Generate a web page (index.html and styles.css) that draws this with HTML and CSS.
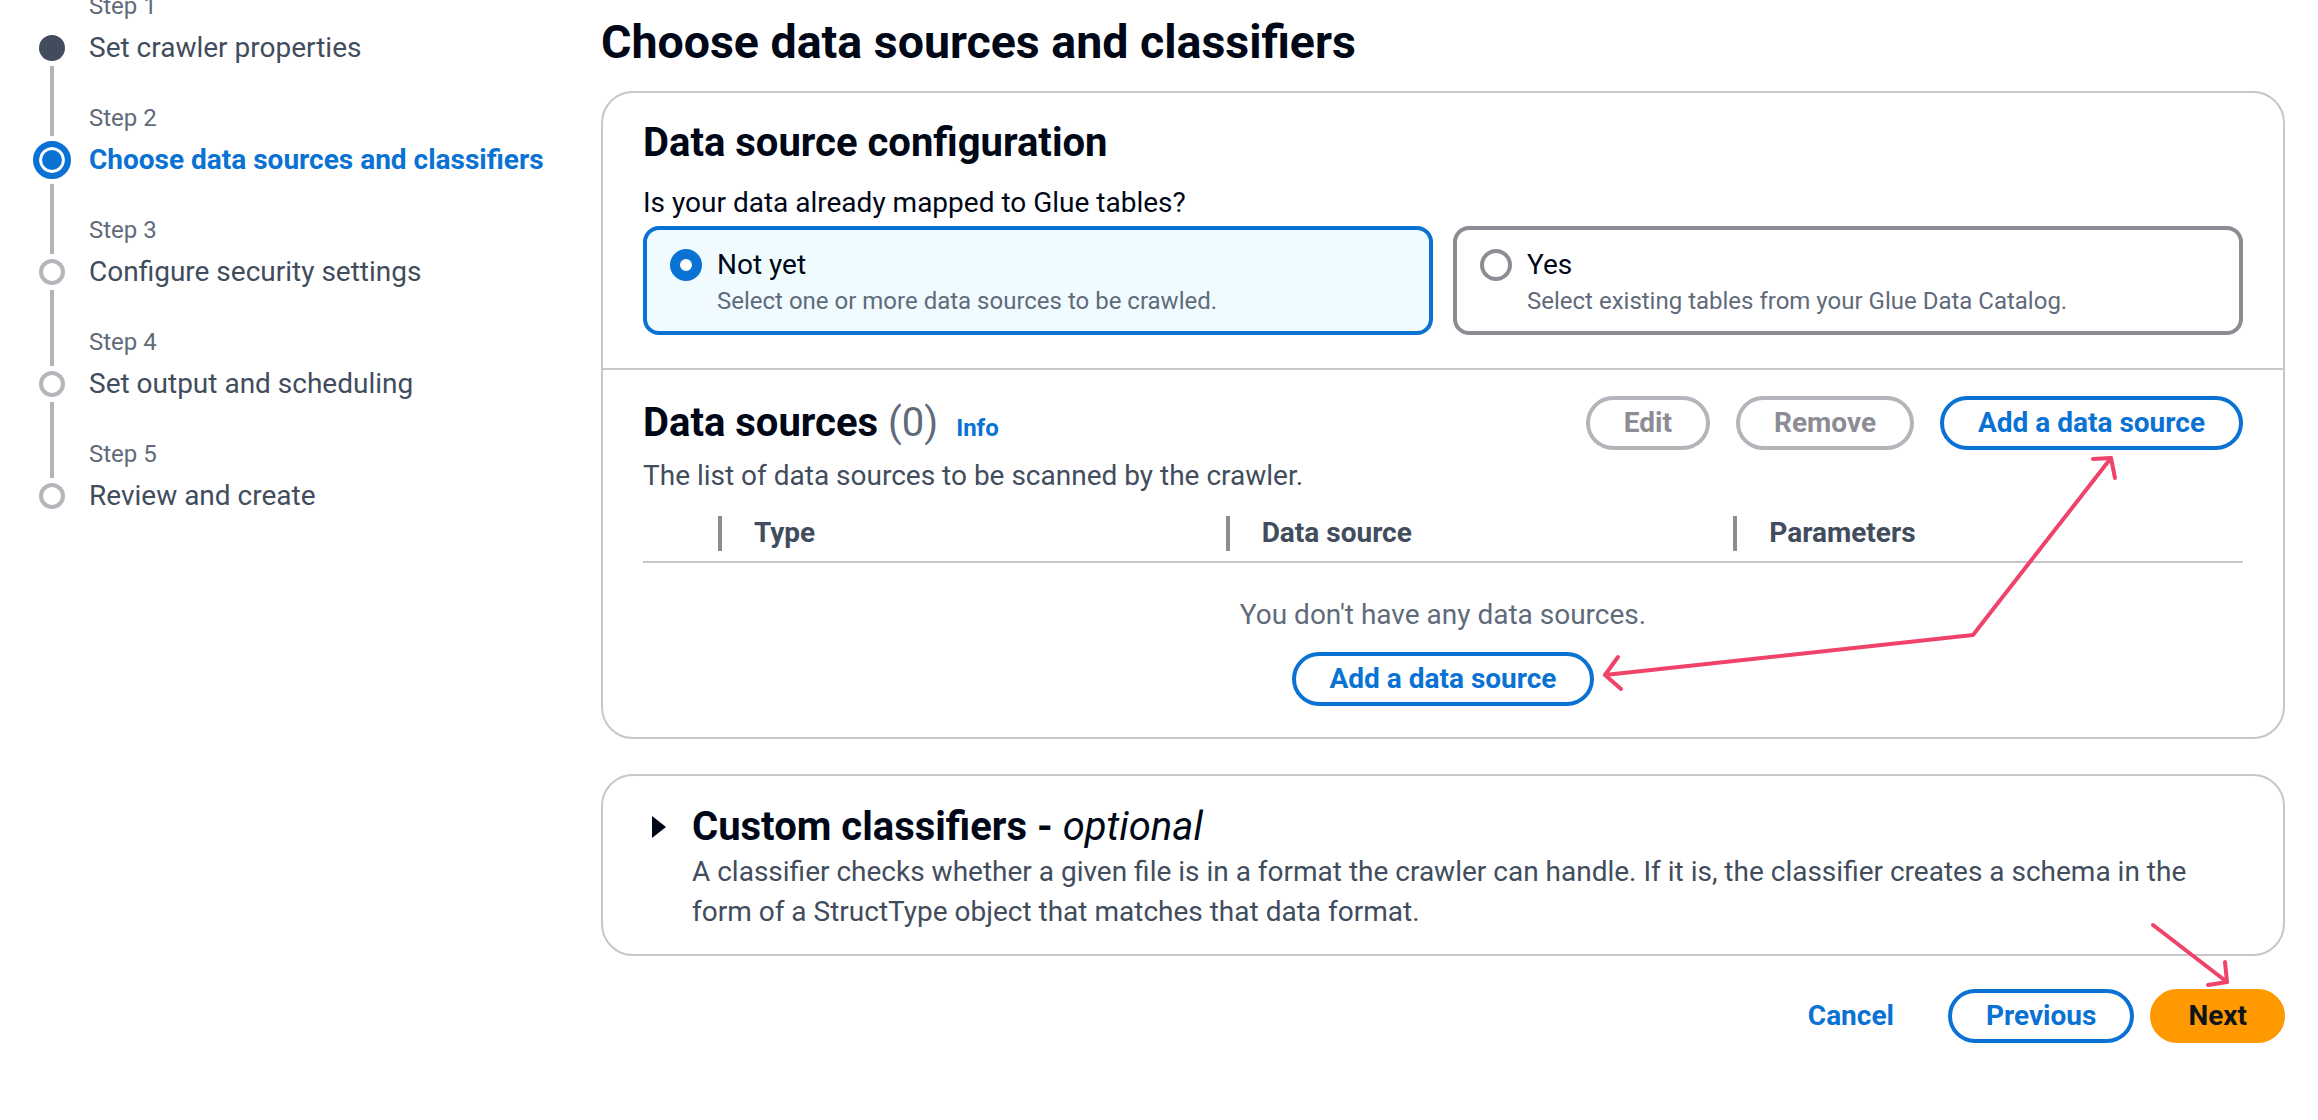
FILE: index.html
```html
<!DOCTYPE html>
<html lang="en">
<head>
<meta charset="utf-8">
<title>Choose data sources and classifiers</title>
<link rel="stylesheet" href="styles.css">
</head>
<body>
<div class="page">
  <nav class="sidebar">
    <ol class="wizard-nav">
      <li class="step">
        <span class="step-label">Step 1</span>
        <span class="step-dot step-dot--done"></span>
        <span class="step-title">Set crawler properties</span>
      </li>
      <li class="step">
        <span class="step-label">Step 2</span>
        <span class="step-dot step-dot--active"></span>
        <span class="step-title step-title--active">Choose data sources and classifiers</span>
      </li>
      <li class="step">
        <span class="step-label">Step 3</span>
        <span class="step-dot step-dot--pending"></span>
        <span class="step-title">Configure security settings</span>
      </li>
      <li class="step">
        <span class="step-label">Step 4</span>
        <span class="step-dot step-dot--pending"></span>
        <span class="step-title">Set output and scheduling</span>
      </li>
      <li class="step">
        <span class="step-label">Step 5</span>
        <span class="step-dot step-dot--pending"></span>
        <span class="step-title">Review and create</span>
      </li>
    </ol>
  </nav>

  <main class="main">
    <h1 class="page-title">Choose data sources and classifiers</h1>

    <section class="container">
      <div class="section section--config">
        <h2 class="section-title">Data source configuration</h2>
        <p class="question">Is your data already mapped to Glue tables?</p>
        <div class="tiles">
          <div class="tile tile--selected">
            <span class="radio radio--checked"></span>
            <span class="tile-label">Not yet</span>
            <span class="tile-desc">Select one or more data sources to be crawled.</span>
          </div>
          <div class="tile">
            <span class="radio"></span>
            <span class="tile-label">Yes</span>
            <span class="tile-desc">Select existing tables from your Glue Data Catalog.</span>
          </div>
        </div>
      </div>

      <div class="section section--sources">
        <div class="header-row">
          <div class="header-text">
            <h2 class="section-title ds-title">Data sources <span class="count">(0)</span><a class="info" href="#">Info</a></h2>
            <p class="desc">The list of data sources to be scanned by the crawler.</p>
          </div>
          <div class="actions">
            <button class="btn btn--disabled" type="button">Edit</button>
            <button class="btn btn--disabled" type="button">Remove</button>
            <button class="btn" type="button">Add a data source</button>
          </div>
        </div>
        <div class="table-head">
          <div class="th th--select"></div>
          <div class="th">Type</div>
          <div class="th">Data source</div>
          <div class="th">Parameters</div>
        </div>
        <div class="empty">
          <span class="empty-text">You don't have any data sources.</span>
          <button class="btn" type="button">Add a data source</button>
        </div>
      </div>
    </section>

    <section class="container expand">
      <svg class="caret" width="32" height="32" viewBox="0 0 32 32" aria-hidden="true">
        <path d="M9 5 L23 16 L9 27 Z" fill="#000716"/>
      </svg>
      <h2 class="expand-title">Custom classifiers - <em>optional</em></h2>
      <p class="expand-desc">A classifier checks whether a given file is in a format the crawler can handle. If it is, the classifier creates a schema in the form of a StructType object that matches that data format.</p>
    </section>

    <div class="footer">
      <button class="btn btn--link" type="button">Cancel</button>
      <button class="btn" type="button">Previous</button>
      <button class="btn btn--primary" type="button">Next</button>
    </div>
  </main>
</div>

<svg class="annotations" width="2318" height="1120" viewBox="0 0 2318 1120" aria-hidden="true">
  <g fill="none" stroke="#f0436a" stroke-width="4" stroke-linecap="round" stroke-linejoin="round">
    <polyline points="2111,458 1973,635 1605,675"/>
    <polyline points="2093,459 2111,458 2115,478"/>
    <polyline points="1618,657 1605,675 1621,689"/>
    <line x1="2153" y1="925" x2="2227" y2="982"/>
    <polyline points="2225,962 2227,982 2208,985"/>
  </g>
</svg>
</body>
</html>
```

FILE: styles.css
```css
html, body {
  margin: 0;
  padding: 0;
  background: #ffffff;
}

body {
  font-family: Roboto, "Liberation Sans", Arial, sans-serif;
  font-size: 28px;
  line-height: 40px;
  color: #000716;
  overflow: hidden;
}

.page {
  display: grid;
  grid-template-columns: 601px 1fr;
  padding-right: 33px;
}

/* ---------- Sidebar wizard navigation ---------- */
.wizard-nav {
  list-style: none;
  margin: -10px 0 0;
  padding: 0 0 0 33px;
  background: linear-gradient(#b4b4bb, #b4b4bb) 50px 58px / 4px 447px no-repeat;
}

.step {
  display: grid;
  grid-template-columns: 38px 1fr;
  grid-template-rows: 38px 40px;
  column-gap: 18px;
  margin-bottom: 34px;
}

.step:last-child {
  margin-bottom: 0;
}

.step-label {
  grid-column: 2;
  grid-row: 1;
  font-size: 24px;
  line-height: 32px;
  color: #5f6b7a;
}

.step-dot {
  grid-column: 1;
  grid-row: 2;
  align-self: center;
  justify-self: center;
  width: 26px;
  height: 26px;
  box-sizing: border-box;
  border-radius: 50%;
  box-shadow: 0 0 0 5px #ffffff;
}

.step-dot--done {
  background: #414d5c;
}

.step-dot--active {
  width: 38px;
  height: 38px;
  border: 6px solid #0972d3;
  background: #0972d3;
  box-shadow: inset 0 0 0 3px #ffffff, 0 0 0 5px #ffffff;
}

.step-dot--pending {
  border: 4px solid #b4b4bb;
  background: #ffffff;
}

.step-title {
  grid-column: 2;
  grid-row: 2;
  color: #414d5c;
  white-space: nowrap;
}

.step-title--active {
  color: #0972d3;
  font-weight: 700;
}

/* ---------- Main ---------- */
.main {
  padding-top: 12px;
}

.page-title {
  margin: 0 0 19px;
  font-size: 46.5px;
  line-height: 60px;
  font-weight: 700;
  color: #000716;
}

.container {
  border: 2px solid #c6c6cd;
  border-radius: 32px;
  background: #ffffff;
}

.section--config {
  padding: 26px 40px 33px;
  border-bottom: 2px solid #c6c6cd;
}

.section--sources {
  padding: 26px 40px 31px;
}

.section-title {
  margin: 0;
  font-size: 40px;
  line-height: 48px;
  font-weight: 700;
  color: #000716;
}

.question {
  margin: 16px 0 0;
  color: #000716;
}

.tiles {
  display: grid;
  grid-template-columns: 1fr 1fr;
  gap: 20px;
  margin-top: 3px;
}

.tile {
  display: grid;
  grid-template-columns: 32px 1fr;
  column-gap: 15px;
  padding: 15px 20px 14px 23px;
  border: 4px solid #8c8c94;
  border-radius: 16px;
  background: #ffffff;
}

.tile--selected {
  border-color: #0972d3;
  background: #f0fbff;
}

.radio {
  grid-column: 1;
  grid-row: 1;
  align-self: center;
  width: 32px;
  height: 32px;
  box-sizing: border-box;
  border-radius: 50%;
  border: 4px solid #8c8c94;
  background: #ffffff;
}

.radio--checked {
  border: 10px solid #0972d3;
}

.tile-label {
  grid-column: 2;
  grid-row: 1;
  color: #000716;
}

.tile-desc {
  grid-column: 2;
  grid-row: 2;
  font-size: 24px;
  line-height: 32px;
  color: #5f6b7a;
}

/* Data sources header */
.header-row {
  display: flex;
  justify-content: space-between;
  align-items: flex-start;
}

.ds-title {
  line-height: 54px;
}

.count {
  font-weight: 400;
  color: #5f6b7a;
}

.info {
  margin-left: 18px;
  font-size: 24px;
  line-height: 24px;
  font-weight: 700;
  color: #0972d3;
  text-decoration: none;
}

.desc {
  margin: 6px 0 0;
  color: #414d5c;
}

.actions {
  display: flex;
  gap: 26px;
}

.btn {
  display: inline-flex;
  align-items: center;
  justify-content: center;
  height: 54px;
  box-sizing: border-box;
  padding: 0 34px;
  border: 4px solid #0972d3;
  border-radius: 27px;
  background: #ffffff;
  color: #0972d3;
  font-family: Roboto, "Liberation Sans", Arial, sans-serif;
  font-size: 28px;
  line-height: 1;
  font-weight: 700;
  white-space: nowrap;
  cursor: pointer;
}

.btn--disabled {
  border-color: #b4b4bb;
  color: #8c8c94;
}

.btn--primary {
  background: #ff9900;
  border-color: #ff9900;
  color: #0f141a;
}

.btn--link {
  border-color: transparent;
  background: transparent;
}

/* Table */
.table-head {
  display: grid;
  grid-template-columns: 77px 1fr 1fr 1fr;
  height: 56px;
  margin-top: 9px;
  border-bottom: 2px solid #c6c6cd;
}

.th {
  display: flex;
  align-items: center;
  font-weight: 700;
  color: #414d5c;
}

.th::before {
  content: "";
  flex: none;
  width: 4px;
  height: 35px;
  margin: 0 32px 0 -2px;
  background: #8c8c94;
}

.th--select::before {
  display: none;
}

.empty {
  display: flex;
  flex-direction: column;
  align-items: center;
  padding-top: 32px;
}

.empty-text {
  color: #5f6b7a;
}

.empty .btn {
  margin-top: 17px;
}

/* Expandable section */
.expand {
  display: grid;
  grid-template-columns: 32px 1fr;
  column-gap: 17px;
  margin-top: 35px;
  padding: 27px 40px 22px;
}

.caret {
  grid-column: 1;
  grid-row: 1;
  align-self: center;
}

.expand-title {
  grid-column: 2;
  grid-row: 1;
  margin: 0;
  font-size: 40px;
  line-height: 48px;
  font-weight: 700;
  color: #000716;
}

.expand-title em {
  font-weight: 400;
}

.expand-desc {
  grid-column: 2;
  grid-row: 2;
  margin: 1px 0 0;
  max-width: 1530px;
  color: #414d5c;
}

/* Footer */
.footer {
  display: flex;
  justify-content: flex-end;
  gap: 16px;
  margin-top: 33px;
}

/* Annotation overlay */
.annotations {
  position: absolute;
  top: 0;
  left: 0;
  pointer-events: none;
}
```
